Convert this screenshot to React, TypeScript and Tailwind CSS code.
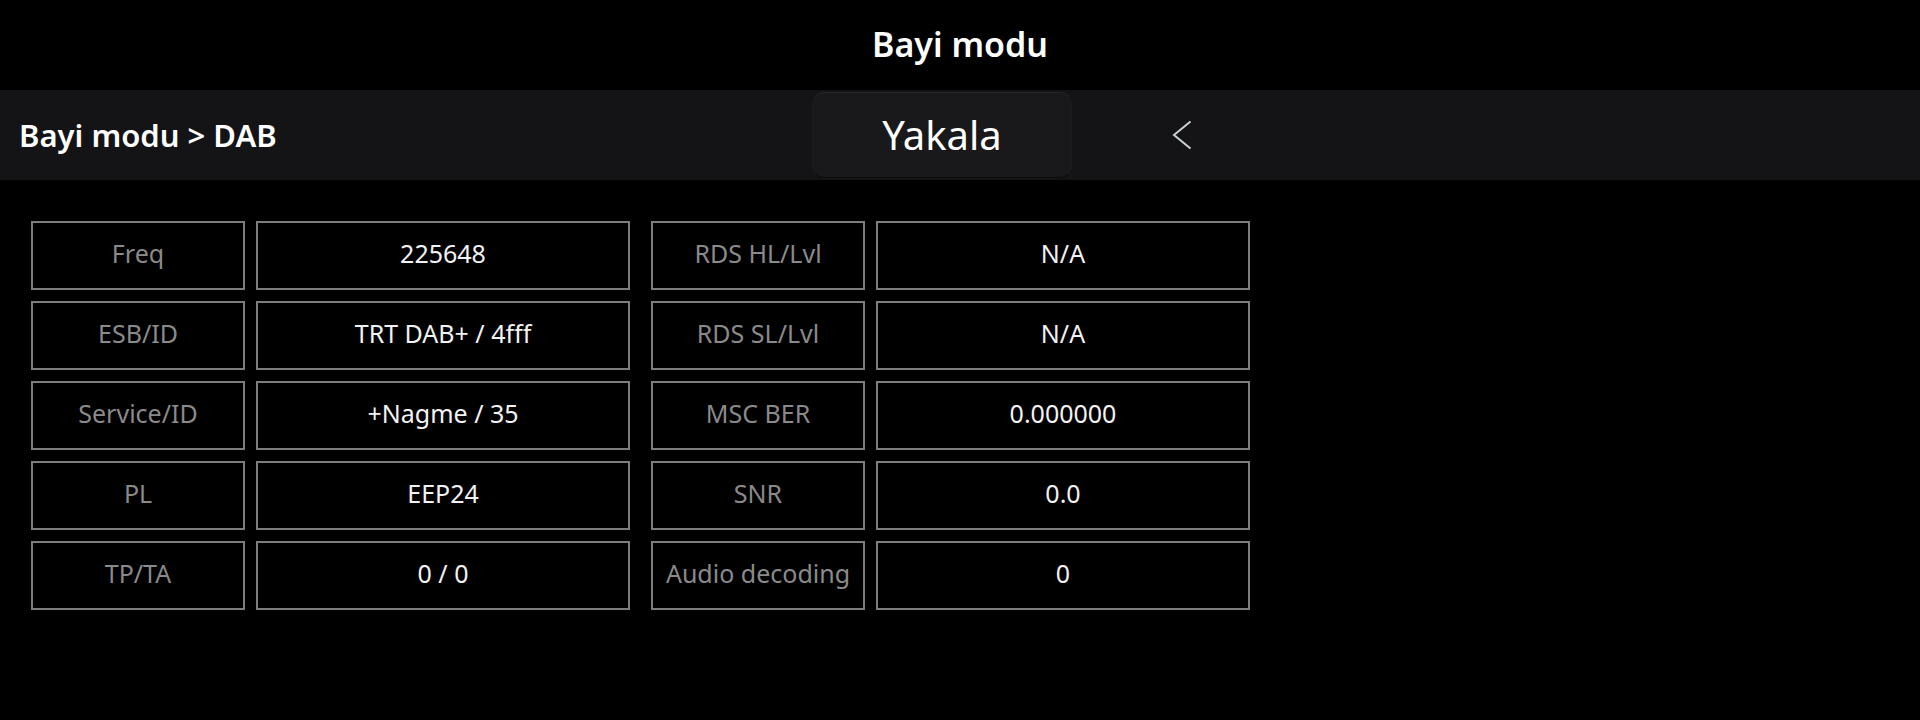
const rows: [string, string, string, string][] = [
  ["Freq", "225648", "RDS HL/Lvl", "N/A"],
  ["ESB/ID", "TRT DAB+ / 4fff", "RDS SL/Lvl", "N/A"],
  ["Service/ID", "+Nagme / 35", "MSC BER", "0.000000"],
  ["PL", "EEP24", "SNR", "0.0"],
  ["TP/TA", "0 / 0", "Audio decoding", "0"],
];

function Cell({ text, label, className = "" }: { text: string; label?: boolean; className?: string }) {
  return (
    <div
      className={`flex h-[69px] shrink-0 items-center justify-center border-2 border-[#7d7d7d] pb-[3px] text-[25px] ${
        label ? "text-[#8a8a8a]" : "text-[#f2f2f2]"
      } ${className}`}
    >
      {text}
    </div>
  );
}

export default function App() {
  return (
    <div
      className="h-[720px] w-[1920px] overflow-hidden bg-black text-white"
      style={{ fontFamily: '"Noto Sans", "Open Sans", sans-serif' }}
    >
      <header className="flex h-[90px] items-center justify-center">
        <h1 className="pb-[2px] text-[34px] font-semibold leading-none">Bayi modu</h1>
      </header>

      <div className="flex h-[90px] items-center bg-[#141416]">
        <div className="w-[812px] pl-[19px] text-[31px] font-semibold">Bayi modu &gt; DAB</div>
        <button className="flex h-[86px] w-[260px] items-center justify-center rounded-[12px] border border-t-[#26262a] border-x-[#1c1c1f] border-b-[#0c0c0d] bg-[#19191b] text-[40px] text-white">
          Yakala
        </button>
        <div className="ml-[100px] flex items-center">
          <svg width="20" height="30" viewBox="0 0 20 30" fill="none">
            <path d="M18.5 1.5 L2 15 L18.5 28.5" stroke="#c9d0d6" strokeWidth="2" strokeLinejoin="miter" />
          </svg>
        </div>
      </div>

      <div className="mt-[41px] ml-[31px] flex flex-col gap-[11px]">
        {rows.map(([l1, v1, l2, v2]) => (
          <div key={l1} className="flex gap-[11px]">
            <Cell text={l1} label className="w-[214px]" />
            <Cell text={v1} className="w-[374px]" />
            <Cell text={l2} label className="ml-[10px] w-[214px]" />
            <Cell text={v2} className="w-[374px]" />
          </div>
        ))}
      </div>
    </div>
  );
}
